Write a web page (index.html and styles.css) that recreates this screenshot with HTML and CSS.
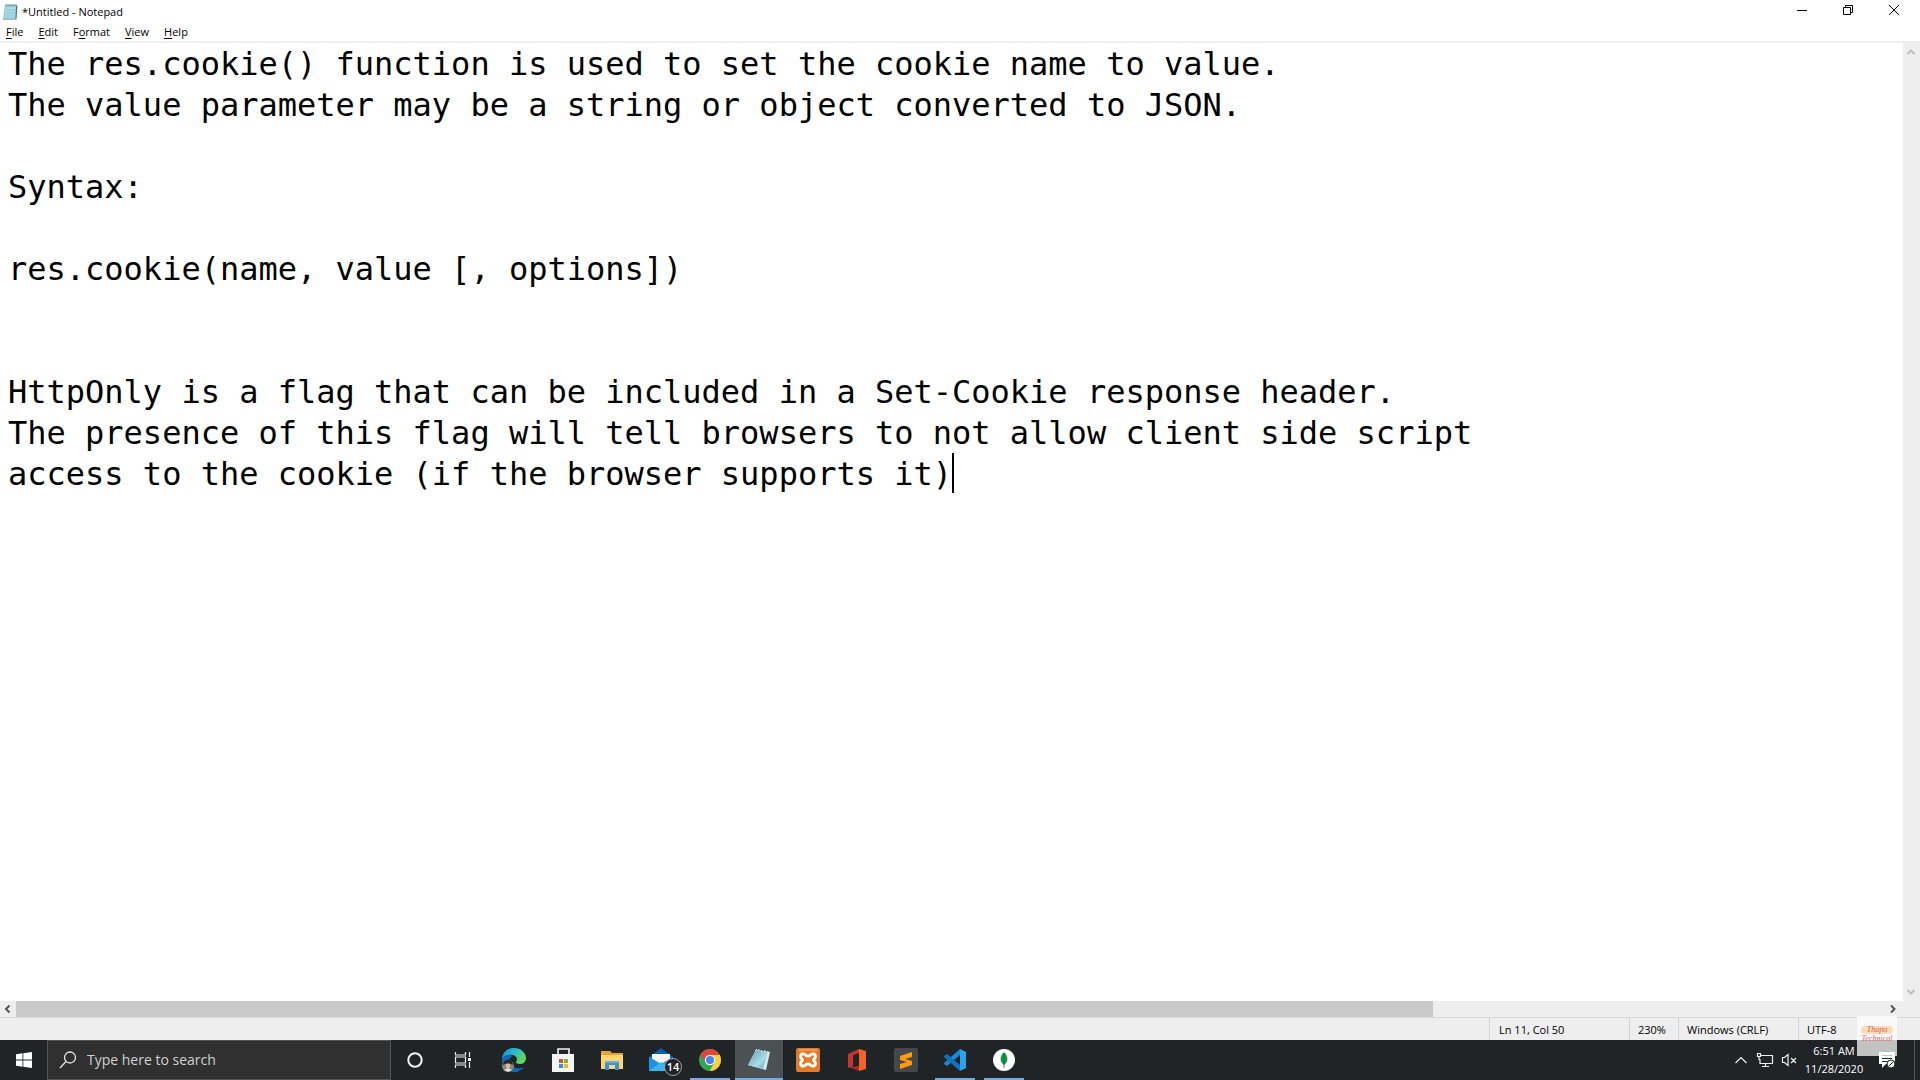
FILE: index.html
```html
<!DOCTYPE html>
<html lang="en">
<head>
<meta charset="utf-8">
<title>*Untitled - Notepad</title>
<link rel="stylesheet" href="styles.css">
</head>
<body>
<main class="window">
  <header class="titlebar">
    <svg class="app-icon" width="16" height="18" viewBox="0 0 16 18"><path d="M3 2h12l-1 14H1z" fill="#8cc5d3"/><path d="M4 4h10l-1 11H2z" fill="#a9dce6"/><path d="M14 3h1.500l-1 13.500H1V16h12.500z" fill="#54747c"/><path d="M4 1v2M6 1v2M8 1v2M10 1v2M12 1v2M14 1v2" stroke="#7b8f96"/><path d="M4 7h9M4 10h9M3 13h9" stroke="#7fbccb" stroke-width=".6"/></svg>
    <h1 class="title">*Untitled - Notepad</h1>
    <div class="controls">
      <button class="control" aria-label="Minimize"><svg width="12" height="12" viewBox="0 0 12 12"><path d="M1 6.500h10"/></svg></button>
      <button class="control" aria-label="Restore"><svg width="12" height="12" viewBox="0 0 12 12"><path d="M1.500 3.500h7v7h-7zM3.500 3.500v-2h7v7h-2"/></svg></button>
      <button class="control" aria-label="Close"><svg width="12" height="12" viewBox="0 0 12 12"><path d="M1 1l10 10M11 1L1 11"/></svg></button>
    </div>
  </header>
  <nav class="menubar">
    <button class="menu"><u>F</u>ile</button>
    <button class="menu"><u>E</u>dit</button>
    <button class="menu">F<u>o</u>rmat</button>
    <button class="menu"><u>V</u>iew</button>
    <button class="menu"><u>H</u>elp</button>
  </nav>
  <div class="editor">
    <div class="page">
      <textarea class="text" aria-label="Document text" wrap="off" spellcheck="false">The res.cookie() function is used to set the cookie name to value.
The value parameter may be a string or object converted to JSON.

Syntax:

res.cookie(name, value [, options])


HttpOnly is a flag that can be included in a Set-Cookie response header.
The presence of this flag will tell browsers to not allow client side script
access to the cookie (if the browser supports it)</textarea>
      <span class="caret"></span>
    </div>
    <div class="vscroll">
      <svg width="10" height="8" viewBox="0 0 10 8"><path d="M1.500 6L5 2.500 8.500 6"/></svg>
      <svg width="10" height="8" viewBox="0 0 10 8"><path d="M1.500 2L5 5.500 8.500 2"/></svg>
    </div>
  </div>
  <div class="hscroll">
    <span class="arrow"><svg width="8" height="10" viewBox="0 0 8 10"><path d="M5.500 1.500L2 5l3.500 3.500"/></svg></span>
    <span class="track"><span class="thumb"></span></span>
    <span class="arrow"><svg width="8" height="10" viewBox="0 0 8 10"><path d="M2 1.500L5.500 5 2 8.500"/></svg></span>
  </div>
  <footer class="status">
    <span class="cell position">Ln 11, Col 50</span>
    <span class="cell zoom">230%</span>
    <span class="cell ending">Windows (CRLF)</span>
    <span class="cell encoding">UTF-8</span>
  </footer>
</main>

<div class="taskbar">
  <button class="start" aria-label="Start"><svg width="16" height="16" viewBox="0 0 16 16"><path d="M0 2.200L6.500 1.300v6.200H0zM7.300 1.200L16 0v7.500H7.300zM0 8.400h6.500v6.300L0 13.800zM7.300 8.400H16V16l-8.700-1.200z" fill="#fff"/></svg></button>
  <label class="search">
    <svg width="18" height="18" viewBox="0 0 18 18" fill="none" stroke="#e6e6e6" stroke-width="1.300"><circle cx="11" cy="6.500" r="5.500"/><path d="M7 10.500L1 17"/></svg>
    <input class="search-input" type="text" placeholder="Type here to search" aria-label="Type here to search">
  </label>
  <div class="shell">
    <button class="task" aria-label="Cortana"><svg width="18" height="18" viewBox="0 0 18 18"><circle cx="9" cy="9" r="6.700" fill="none" stroke="#f4f4f4" stroke-width="2"/></svg></button>
    <button class="task" aria-label="Task View"><svg width="18" height="18" viewBox="0 0 18 18" fill="none" stroke="#eee" stroke-width="1.200"><path d="M1.500 1v3h10V1M1.500 17v-3h10v3M1.500 6h10v6h-10zM15.500 1v5M15.500 11v6"/><path d="M14 7h3v3h-3z" fill="#fff" stroke="none"/></svg></button>
  </div>
  <div class="apps">
    <button class="task" aria-label="Microsoft Edge"><svg width="26" height="26" viewBox="0 0 26 26"><defs><linearGradient id="edge-top" x1="0" y1="0" x2="1" y2=".5"><stop offset="0" stop-color="#1688d4"/><stop offset=".5" stop-color="#27b8ce"/><stop offset="1" stop-color="#63d957"/></linearGradient></defs><path d="M1 13C1 5 7 1 13 1c7 0 12 5 12 10 0 4-3 6-6 6-3 0-5-1-4-2 2-2 1-6-3-7-5-1-10 1-11 5z" fill="url(#edge-top)"/><path d="M1 13c1-5 7-6 11-4-4 1-5 6-2 9 3 4 9 4 13 2-3 4-8 6-12 5C5 24 1 19 1 13z" fill="#1467b5"/><circle cx="7" cy="19" r="6" fill="#8d8580"/><path d="M2 18c0-7 10-7 10 0l-2-1-3-1-3 1z" fill="#25252a"/><path d="M5 17h4v3l-2 2-2-2z" fill="#e2b5a2"/><path d="M3 23l4-2 4 2-4 2z" fill="#ddd"/></svg></button>
    <button class="task" aria-label="Microsoft Store"><svg width="24" height="26" viewBox="0 0 24 26"><path d="M1 7h22v18H1z" fill="#f4f4f4"/><path d="M7 8V2h11v6" fill="none" stroke="#f4f4f4" stroke-width="1.600"/><path d="M8 12h4v4H8z" fill="#e8502b"/><path d="M13 12h4v4h-4z" fill="#7eb72c"/><path d="M8 17h4v4H8z" fill="#2997df"/><path d="M13 17h4v4h-4z" fill="#f7b51f"/></svg></button>
    <button class="task" aria-label="File Explorer"><svg width="24" height="22" viewBox="0 0 24 22"><path d="M1 2h9l2 2h11v16H1z" fill="#e6a52e"/><path d="M1 6h22v14H1z" fill="#ffd56c"/><path d="M5 12h14v9h-4v-5H9v5H5z" fill="#3b91d6"/><path d="M5 12h14v2H5z" fill="#62b1e8"/></svg></button>
    <button class="task" aria-label="Mail, 14 unread"><svg width="26" height="26" viewBox="0 0 26 26"><path d="M1 10L13 1l12 9v3H1z" fill="#0c61ad"/><path d="M4 7h18v9H4z" fill="#f3f5f7"/><path d="M1 10l12 7 12-7v14H1z" fill="#1696e5"/><path d="M1 24l12-9 12 9z" fill="#3eb5f3"/></svg><span class="badge">14</span></button>
    <button class="task running" aria-label="Google Chrome"><svg width="24" height="24" viewBox="0 0 24 24"><circle cx="12" cy="12" r="11" fill="#35a554"/><path d="M2.500 6.500A11 11 0 0 1 21.500 6.500L22 7H12L7.500 14.500z" fill="#df4638"/><path d="M12 7h9.800A11 11 0 0 1 11.500 23l5-8.500z" fill="#fbcf3b"/><circle cx="12" cy="12" r="5.200" fill="#f4f4f4"/><circle cx="12" cy="12" r="4" fill="#4286ed"/></svg></button>
    <button class="task running active" aria-label="Notepad"><svg width="24" height="24" viewBox="0 0 24 24"><defs><linearGradient id="pad" x1="0" y1="0" x2="1" y2="1"><stop offset="0" stop-color="#5f9aa9"/><stop offset=".6" stop-color="#a7dce8"/><stop offset="1" stop-color="#60a6bd"/></linearGradient></defs><path d="M9 2l14 2-4 18L1 17z" fill="#dce8e9"/><path d="M9 2l12 2-5 17-15-4z" fill="url(#pad)"/><path d="M8 3l2-2M11 3l1-2M14 4l1-2M17 4l1-2M20 5l1-2" stroke="#d8e5e7"/></svg></button>
    <button class="task" aria-label="XAMPP"><svg width="24" height="24" viewBox="0 0 24 24"><rect width="24" height="24" rx="2" fill="#e67828"/><path d="M3 2h18" stroke="#f3b98b"/><path d="M8 6c-3-1-5 3-2 5 1 1 1 1 0 2-3 2-1 6 2 5 2-1 2-2 4-2s2 1 4 2c3 1 5-3 2-5-1-1-1-1 0-2 3-2 1-6-2-5-2 1-2 2-4 2s-2-1-4-2z" fill="none" stroke="#fff" stroke-width="2.800"/></svg></button>
    <button class="task" aria-label="Office"><svg width="20" height="24" viewBox="0 0 20 24"><path d="M1 6l11-5v4L6 7v11l-4 2-1-1z" fill="#c9342e"/><path d="M12 1l7 2v18l-7 2z" fill="#f26324"/><path d="M2 19l10-1v5z" fill="#a82a29"/></svg></button>
    <button class="task" aria-label="Sublime Text"><svg width="24" height="24" viewBox="0 0 24 24"><rect width="24" height="24" rx="2" fill="#45484b"/><path d="M6 8l12-4v5l-7 2 7 2v4L6 21v-5l7-2-7-2z" fill="#ff9b0b"/></svg></button>
    <button class="task running" aria-label="Visual Studio Code"><svg width="24" height="24" viewBox="0 0 24 24"><path d="M17 1l6 3v16l-6 3z" fill="#28a4ed"/><path d="M17 1v6L4 18l-3-2v-1z" fill="#178ad5"/><path d="M17 23v-6L4 6 1 8v1z" fill="#0e72bd"/></svg></button>
    <button class="task running" aria-label="MongoDB Compass"><svg width="24" height="24" viewBox="0 0 24 24"><circle cx="12" cy="12" r="11" fill="#fff"/><path d="M12 4c5 5 4 10 0 13-4-3-5-8 0-13z" fill="#159447"/><path d="M12 5v15" stroke="#087a38" stroke-width=".8"/></svg></button>
  </div>
  <div class="tray">
    <button class="tray-icon" aria-label="Show hidden icons"><svg width="14" height="8" viewBox="0 0 14 8"><path d="M1.500 7L7 1.500 12.500 7"/></svg></button>
    <button class="tray-icon" aria-label="Network"><svg width="18" height="16" viewBox="0 0 18 16"><path d="M5 3.500h11.500v8H4V7M9.500 12v2.500M6 14.500h7M1.500 1.500h3v3h-3zM3 5v3"/></svg></button>
    <button class="tray-icon" aria-label="Volume muted"><svg width="16" height="14" viewBox="0 0 16 14"><path d="M1.500 4.500h2L7 1.500v11l-3.500-3h-2zM10 5l5 5M15 5l-5 5"/></svg></button>
    <button class="clock"><time>6:51 AM</time><time>11/28/2020</time></button>
    <button class="notify" aria-label="Notifications"><svg width="18" height="18" viewBox="0 0 18 18"><path d="M1 1h16v12H8l-4 4v-4H1z" fill="#fff"/><path d="M4 4.500h10M4 7.500h10M4 10.500h5" stroke="#202426"/><circle cx="13" cy="13" r="4" fill="#f4f4f4" stroke="#202426"/><path d="M10.500 15.500l5-5" stroke="#202426"/></svg></button>
    <button class="peek" aria-label="Show desktop"></button>
  </div>
</div>

<div class="watermark"><span class="mark-first">Thapa</span><span>Technical</span></div>
</body>
</html>
```

FILE: styles.css
```css
* { box-sizing: border-box; }

body {
  margin: 0;
  height: 100vh;
  display: flex;
  flex-direction: column;
  overflow: hidden;
  position: relative;
  background: #fff;
  color: #000;
  font-family: "Open Sans", "Noto Sans", sans-serif;
  font-size: 11px;
}

button {
  padding: 0;
  border: 0;
  background: none;
  color: inherit;
  font: inherit;
}

svg { display: block; flex: none; }

/* Notepad window */
.window {
  flex: 1;
  min-height: 0;
  display: flex;
  flex-direction: column;
}

.titlebar {
  height: 23px;
  display: flex;
  align-items: center;
  padding-left: 2px;
}

.title {
  flex: 1;
  margin: 0 0 0 4px;
  font-size: 11px;
  font-weight: 400;
}

.controls {
  align-self: flex-start;
  display: flex;
  padding-right: 3px;
}

.control {
  width: 46px;
  height: 20px;
  display: grid;
  place-items: center;
}

.control svg { fill: none; stroke: #000; }

.menubar {
  height: 20px;
  display: flex;
  gap: 15px;
  padding-left: 6px;
  border-bottom: 2px solid #efefef;
}

.menu { line-height: 18px; }

.menu u { text-underline-offset: 2px; }

.editor {
  flex: 1;
  min-height: 0;
  display: flex;
}

.page {
  flex: 1;
  position: relative;
  font: 32px/41px "DejaVu Sans Mono", "Liberation Mono", monospace;
}

.text {
  display: block;
  width: 100%;
  height: 100%;
  margin: 0;
  padding: 1px 0 0 8px;
  border: 0;
  outline: 0;
  resize: none;
  overflow: hidden;
  background: #fff;
  color: #000;
  font: inherit;
}

/* insertion point on line 11, column 50 */
.caret {
  position: absolute;
  left: calc(8px + 49ch);
  top: 410px;
  width: 2px;
  height: 40px;
  background: #000;
}

.vscroll {
  width: 17px;
  display: flex;
  flex-direction: column;
  align-items: center;
  justify-content: space-between;
  padding: 5px 2px 5px 0;
  background: #eee;
}

.vscroll svg { fill: none; stroke: #bdbdbd; stroke-width: 2; }

.hscroll {
  height: 16px;
  display: flex;
  padding-right: 19px;
  background: #eee;
}

.arrow {
  width: 16px;
  display: grid;
  place-items: center;
}

.arrow svg { fill: none; stroke: #555; stroke-width: 2; }

.track { flex: 1; display: flex; }

.thumb { width: 75.8%; background: #c9c9c9; }

.status {
  height: 23px;
  display: flex;
  justify-content: flex-end;
  border-top: 1px solid #d9d9d9;
  background: #eee;
}

.cell {
  padding-left: 8px;
  border-left: 1px solid #d4d4d4;
  line-height: 24px;
}

.position { width: 140px; padding-left: 9px; }
.zoom { width: 49px; }
.ending { width: 120px; }
.encoding { width: 122px; }

/* Taskbar */
.taskbar {
  height: 40px;
  display: flex;
  background: #202426;
  color: #fff;
}

.start {
  width: 47px;
  display: grid;
  place-items: center;
}

.search {
  width: 344px;
  display: flex;
  align-items: center;
  gap: 10px;
  padding-left: 11px;
  border: 1px solid #555;
  background: #303030;
}

.search-input {
  flex: 1;
  min-width: 0;
  padding: 0;
  border: 0;
  outline: 0;
  background: none;
  color: #fff;
  font: 14px/20px "Open Sans", "Noto Sans", sans-serif;
}

.search-input::placeholder { color: #d0d0d0; opacity: 1; }

.shell { display: flex; padding-right: 3px; }

.apps { display: flex; gap: 1px; }

.task {
  position: relative;
  width: 48px;
  display: grid;
  place-items: center;
}

.running::after {
  content: "";
  position: absolute;
  inset: auto 4px 0;
  height: 2px;
  background: #76a9de;
}

.active { background: #4c5254; }

.active::after { inset: auto 0 0; }

.badge {
  position: absolute;
  right: 3px;
  bottom: 4px;
  width: 18px;
  height: 18px;
  border: 1px solid #a0a4a6;
  border-radius: 50%;
  background: #202426;
  font-size: 11px;
  font-weight: 600;
  line-height: 16px;
}

.tray {
  margin-left: auto;
  display: flex;
}

.tray-icon {
  width: 24px;
  display: grid;
  place-items: center;
}

.tray-icon svg { fill: none; stroke: #f0f0f0; stroke-width: 1.2; }

.clock {
  width: 66px;
  display: flex;
  flex-direction: column;
  justify-content: center;
  align-items: center;
  line-height: 18px;
}

.notify {
  width: 47px;
  display: grid;
  place-items: center;
  padding-right: 8px;
}

.peek { width: 6px; border-left: 1px solid #555; }

/* channel mark laid over the corner of the screen */
.watermark {
  position: absolute;
  right: 23px;
  bottom: 24px;
  width: 40px;
  height: 40px;
  display: flex;
  flex-direction: column;
  align-items: center;
  gap: 1px;
  padding-top: 10px;
  background: rgba(255, 255, 255, .72);
  color: #e65a5f;
  font: italic 8px/8px "Liberation Serif", serif;
}

.mark-first {
  width: 32px;
  border-radius: 4px;
  background: #fbdcb8;
  text-align: center;
}
```
